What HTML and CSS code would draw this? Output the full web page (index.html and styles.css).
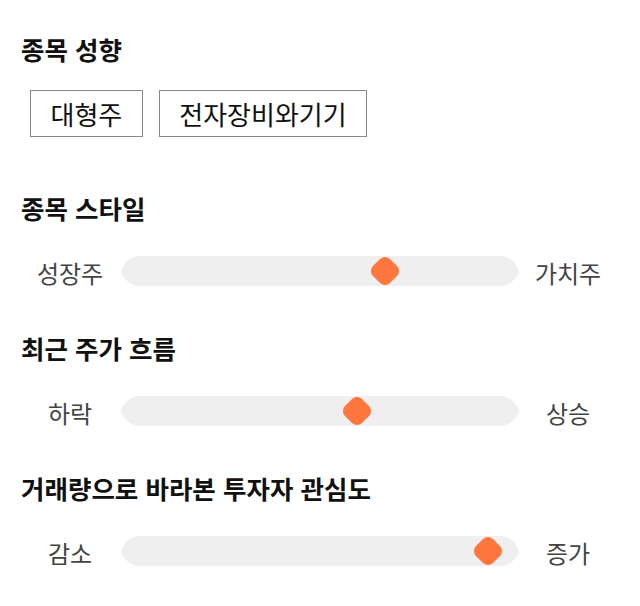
FILE: index.html
```html
<!DOCTYPE html>
<html lang="ko">
<head>
<meta charset="utf-8">
<link rel="stylesheet" href="styles.css">
</head>
<body>
<main class="panel">
  <section class="section section-tags">
    <h2 class="title">종목 성향</h2>
    <div class="tags">
      <span class="tag">대형주</span>
      <span class="tag">전자장비와기기</span>
    </div>
  </section>

  <section class="section">
    <h2 class="title">종목 스타일</h2>
    <div class="slider-row">
      <span class="label">성장주</span>
      <div class="track"><span class="thumb" style="left: 264px"></span></div>
      <span class="label">가치주</span>
    </div>
  </section>

  <section class="section">
    <h2 class="title">최근 주가 흐름</h2>
    <div class="slider-row">
      <span class="label">하락</span>
      <div class="track"><span class="thumb" style="left: 236px"></span></div>
      <span class="label">상승</span>
    </div>
  </section>

  <section class="section">
    <h2 class="title">거래량으로 바라본 투자자 관심도</h2>
    <div class="slider-row">
      <span class="label">감소</span>
      <div class="track"><span class="thumb" style="left: 367px"></span></div>
      <span class="label">증가</span>
    </div>
  </section>
</main>
</body>
</html>
```

FILE: styles.css
```css
* {
  box-sizing: border-box;
}

html, body {
  margin: 0;
  padding: 0;
  background: #ffffff;
}

body {
  font-family: "Noto Sans CJK KR", "Noto Sans", sans-serif;
  color: #000000;
}

.panel {
  width: 640px;
  padding: 33px 20px 0 20px;
  display: flex;
  flex-direction: column;
  gap: 46px;
}

.section {
  display: flex;
  flex-direction: column;
  gap: 32px;
}

.section-tags {
  gap: 25px;
  margin-bottom: 9px;
}

.title {
  margin: 0 0 0 1px;
  font-size: 25.5px;
  line-height: 32px;
  font-weight: 700;
  color: #111111;
}

.tags {
  display: flex;
  gap: 16px;
  margin-left: 10px;
}

.tag {
  display: block;
  border: 1px solid #888888;
  padding: 0 19.5px;
  font-size: 26px;
  line-height: 45px;
  color: #111111;
}

.slider-row {
  display: grid;
  grid-template-columns: 100px 398px 100px;
  align-items: center;
  height: 30px;
}

.label {
  text-align: center;
  font-size: 24px;
  line-height: 26px;
  height: 30px;
  padding-top: 4px;
  color: #444444;
}

.track {
  position: relative;
  width: 398px;
  height: 30px;
  margin-left: 1px;
}

.track::before {
  content: "";
  position: absolute;
  inset: 0;
  background: #efefef;
  clip-path: path("M 19.4 0 L 378.6 0 A 20 20 0 0 1 398 15 A 20 20 0 0 1 378.6 30 L 19.4 30 A 20 20 0 0 1 0 15 A 20 20 0 0 1 19.4 0 Z");
}

.thumb {
  position: absolute;
  top: 50%;
  width: 24px;
  height: 24px;
  background: #ff763f;
  border-radius: 7px;
  transform: translate(-50%, -50%) rotate(45deg);
}
```
